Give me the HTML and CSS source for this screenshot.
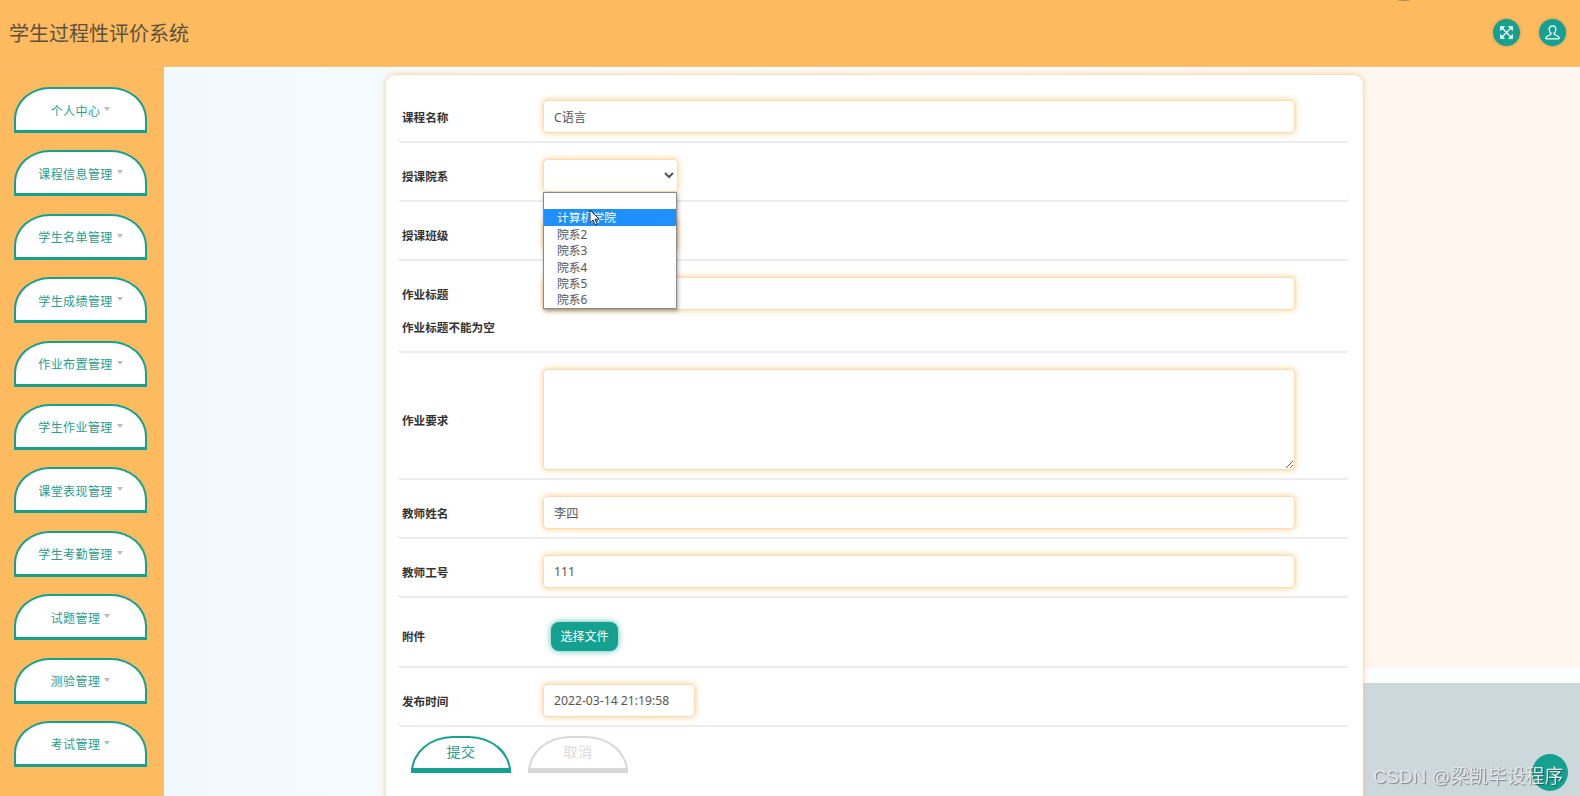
FILE: index.html
```html
<!DOCTYPE html>
<html lang="zh-CN">
<head>
    <meta charset="UTF-8">
    <meta name="viewport" content="width=device-width, initial-scale=1.0">
    <title>学生过程性评价系统</title>

    <link rel="stylesheet" href="styles.css">
</head>
<body>
    <span class="top-sliver"></span>
    <header class="topbar">
        <h1>学生过程性评价系统</h1>
        <div class="topbar-icons">
            <span class="round-icon">
                <svg viewBox="0 0 16 16" width="15" height="15" fill="none" stroke="#fff" stroke-width="1.4">
                    <path d="M3 3l10 10M13 3L3 13"/>
                    <path d="M1.500 6V1.500H6zM10 1.500h4.500V6zM14.500 10v4.500H10zM6 14.500H1.500V10z" fill="#fff" stroke-width="0.6"/>
                </svg>
            </span>
            <span class="round-icon">
                <svg viewBox="0 0 16 16" width="17" height="17" fill="none" stroke="#fff" stroke-width="1.2">
                    <path d="M8 1.800c-2 0-3.200 1.500-3.200 3.400 0 1.500.7 2.700 1.700 3.400v1L2.300 12c-.7.400-.8 1.900 0 1.900h11.400c.8 0 .7-1.500 0-1.900L9.500 9.600v-1c1-.7 1.700-1.900 1.700-3.400C11.200 3.300 10 1.800 8 1.800z"/>
                </svg>
            </span>
        </div>
    </header>

    <div class="layout">
        <nav class="sidebar">
            <a class="menu-item" href="#">个人中心<i class="caret"></i></a>
            <a class="menu-item" href="#">课程信息管理<i class="caret"></i></a>
            <a class="menu-item" href="#">学生名单管理<i class="caret"></i></a>
            <a class="menu-item" href="#">学生成绩管理<i class="caret"></i></a>
            <a class="menu-item" href="#">作业布置管理<i class="caret"></i></a>
            <a class="menu-item" href="#">学生作业管理<i class="caret"></i></a>
            <a class="menu-item" href="#">课堂表现管理<i class="caret"></i></a>
            <a class="menu-item" href="#">学生考勤管理<i class="caret"></i></a>
            <a class="menu-item" href="#">试题管理<i class="caret"></i></a>
            <a class="menu-item" href="#">测验管理<i class="caret"></i></a>
            <a class="menu-item" href="#">考试管理<i class="caret"></i></a>
        </nav>

        <main class="content">
            <form class="card" action="#" method="POST">
                <div class="form-row">
                    <label for="kcmc">课程名称</label>
                    <input type="text" id="kcmc" class="field" value="C语言">
                </div>
                <div class="form-row">
                    <label for="skyx">授课院系</label>
                    <div class="select-wrap">
                        <select id="skyx" class="field field-select"><option></option></select>
                        <ul class="dropdown">
                            <li></li>
                            <li class="active">计算机学院</li>
                            <li>院系2</li>
                            <li>院系3</li>
                            <li>院系4</li>
                            <li>院系5</li>
                            <li>院系6</li>
                        </ul>
                        <svg class="pointer" viewBox="0 0 12 18" width="12" height="18">
                            <path d="M1 1v13l3-3 2.200 5 2-.9L6 10.200h4.200z" fill="#fff" stroke="#1c2a44" stroke-width="1"/>
                        </svg>
                    </div>
                </div>
                <div class="form-row">
                    <label for="skbj">授课班级</label>
                    <select id="skbj" class="field field-select"><option></option></select>
                </div>
                <div class="form-row">
                    <label for="zybt">作业标题</label>
                    <input type="text" id="zybt" class="field">
                    <p class="form-error">作业标题不能为空</p>
                </div>
                <div class="form-row">
                    <label for="zyyq">作业要求</label>
                    <textarea id="zyyq" class="field field-area"></textarea>
                </div>
                <div class="form-row">
                    <label for="jsxm">教师姓名</label>
                    <input type="text" id="jsxm" class="field" value="李四">
                </div>
                <div class="form-row">
                    <label for="jsgh">教师工号</label>
                    <input type="text" id="jsgh" class="field" value="111">
                </div>
                <div class="form-row form-row-file">
                    <label>附件</label>
                    <button type="button" class="btn-file">选择文件</button>
                </div>
                <div class="form-row">
                    <label for="fbsj">发布时间</label>
                    <input type="text" id="fbsj" class="field field-date" value="2022-03-14 21:19:58">
                </div>
                <div class="form-actions">
                    <button type="button" class="btn-dome">提交</button>
                    <button type="button" class="btn-dome btn-muted">取消</button>
                </div>
            </form>
        </main>
    </div>

    <span class="back-top"></span>
    <span class="watermark">CSDN @梁凯毕设程序</span>
</body>
</html>
```

FILE: styles.css
```css
:root{
    --cor-laranja: #FEBA5F;
    --cor-verde: #14A18F;
    --cor-texto: #444;
}

*{
    box-sizing: border-box;
}

html, body{
    height: 100%;
}

body{
    margin: 0;
    overflow: hidden;
    color: var(--cor-texto);
    font-family: "Noto Sans", "Noto Sans CJK SC", sans-serif;
    font-size: 12px;
}

.top-sliver{
    position: fixed;
    top: -5px;
    left: 1394px;
    width: 20px;
    height: 6px;
    border-radius: 50%;
    background-color: #a98a5c;
}

.topbar{
    height: 67px;
    display: flex;
    align-items: center;
    justify-content: space-between;
    padding: 0 14px 2px 9px;
    background-color: var(--cor-laranja);
    border-bottom: 1px solid #f4c07c;
}

.topbar h1{
    margin: 0;
    color: #5a5140;
    font-size: 20px;
    font-weight: 400;
}

.topbar-icons{
    display: flex;
    gap: 19px;
}

.round-icon{
    width: 27px;
    height: 27px;
    display: flex;
    align-items: center;
    justify-content: center;
    border-radius: 50%;
    background-color: var(--cor-verde);
    box-shadow: 0 0 3px rgba(0, 0, 0, 0.2);
}

.layout{
    height: 729px;
    display: flex;
}

.sidebar{
    width: 164px;
    flex-shrink: 0;
    display: flex;
    flex-direction: column;
    gap: 17.4px;
    padding: 20px 17px 0 14px;
    background-color: var(--cor-laranja);
}

.menu-item{
    height: 46px;
    display: flex;
    align-items: center;
    justify-content: center;
    padding-top: 2px;
    color: #2a9d8f;
    background-color: #fff;
    border: 2px solid var(--cor-verde);
    border-bottom-width: 3px;
    border-radius: 36px 36px 0 0 / 32px 32px 0 0;
    font-size: 12px;
    letter-spacing: 0.4px;
    text-decoration: none;
}

.caret{
    width: 0;
    height: 0;
    margin: -3px 0 0 4px;
    border-left: 3.500px solid transparent;
    border-right: 3.500px solid transparent;
    border-top: 4px solid #bbb;
}

.content{
    flex: 1;
    padding: 8px 0 0 222px;
    background:
        linear-gradient(#CDD8DC, #CDD8DC) right bottom / 217px 113px no-repeat,
        linear-gradient(#FBFDFE, #FBFDFE) right bottom / 217px 128px no-repeat,
        linear-gradient(90deg, #F2F9FC 0%, #F6FBFD 28%, #FFF6F0 82%, #FFF6F0 100%);
}

.card{
    width: 977px;
    height: 760px;
    padding: 9px 14px 0 12px;
    background-color: #fff;
    border-radius: 9px 9px 0 0;
    box-shadow: 0 0 5px rgba(254, 186, 95, 0.9);
}

.form-row{
    display: grid;
    grid-template-columns: 145px 752px;
    align-items: center;
    min-height: 59px;
    padding: 16px 0 8px;
    border-bottom: 2px solid #ececec;
    border-radius: 0 0 4px 4px;
}

.form-row label{
    padding-left: 4px;
    color: #333;
    font-size: 11.600px;
    font-weight: 700;
}

.form-row-file{
    min-height: 70px;
}

.form-error{
    grid-column: 1 / 3;
    margin: 9px 0 8px;
    padding-left: 4px;
    color: #333;
    font-size: 11.600px;
    font-weight: 700;
}

.field{
    height: 33px;
    width: 752px;
    padding: 0 10px;
    color: #555;
    background-color: #fff;
    border: 1px solid #fbdcb4;
    border-radius: 4px;
    box-shadow: 0 0 6px rgba(254, 186, 95, 0.75);
    font-family: inherit;
    font-size: 12.200px;
    outline: none;
}

.field-select{
    width: 135px;
    padding: 0 4px;
}

.field-area{
    height: 101px;
    display: block;
    padding: 8px 10px;
}

.field-date{
    width: 152px;
}

.select-wrap{
    position: relative;
    height: 33px;
}

.dropdown{
    position: absolute;
    top: 33px;
    left: 0;
    z-index: 10;
    width: 134px;
    margin: 0;
    padding: 0;
    list-style: none;
    background-color: #fff;
    border: 1px solid #8a8a8a;
    box-shadow: 1px 2px 4px rgba(0, 0, 0, 0.35);
}

.dropdown li{
    height: 16.400px;
    padding-left: 13px;
    color: #555;
    font-size: 11.800px;
    line-height: 16.400px;
}

.dropdown .active{
    color: #fff;
    background-color: #1E90FF;
}

.pointer{
    position: absolute;
    top: 50px;
    left: 46px;
    z-index: 11;
}

.btn-file{
    width: 67px;
    height: 29px;
    margin-left: 8px;
    color: #fff;
    background-color: var(--cor-verde);
    border: none;
    border-radius: 8px;
    box-shadow: 0 0 6px rgba(17, 162, 143, 0.75);
    font-family: inherit;
    font-size: 12px;
}

.form-actions{
    display: flex;
    gap: 17px;
    padding: 9px 0 0 13px;
}

.btn-dome{
    width: 100px;
    height: 37px;
    padding: 0 0 4px;
    color: #2a9d8f;
    background-color: #fff;
    border: 2px solid var(--cor-verde);
    border-bottom-width: 5px;
    border-radius: 42px 42px 0 0 / 36px 36px 0 0;
    font-family: inherit;
    font-size: 14px;
    letter-spacing: 0.4px;
}

.btn-muted{
    color: #d9d9d9;
    border-color: #d8d8d8;
}

.back-top{
    position: fixed;
    top: 754px;
    left: 1532px;
    width: 36px;
    height: 37px;
    border-radius: 50%;
    background-color: var(--cor-verde);
}

.watermark{
    position: fixed;
    top: 764px;
    left: 1373px;
    color: #e4e6e7;
    font-family: "Liberation Sans", "Noto Sans CJK SC", sans-serif;
    font-size: 18.800px;
    line-height: 26px;
    text-shadow: 1px 1px 1px rgba(0, 0, 0, 0.4);
    white-space: nowrap;
}
```
